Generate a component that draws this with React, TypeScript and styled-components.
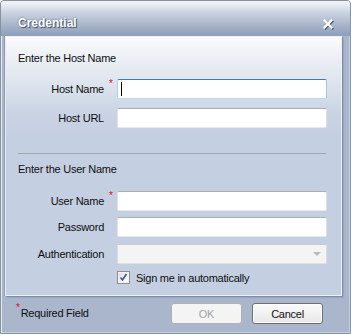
import React from "react";
import styled, { createGlobalStyle } from "styled-components";

const GlobalStyle = createGlobalStyle`
  html, body {
    margin: 0;
    padding: 0;
    background: #ffffff;
  }
  body {
    font-family: "Liberation Sans", Arial, sans-serif;
    font-size: 11px;
    letter-spacing: -0.25px;
    color: #0f0f0f;
  }
`;

export default function App() {
  return (
    <React.Fragment>
      <GlobalStyle />
      <Window>
        <TitleBar>
          <Title>{"Credential"}</Title>
          <CloseIcon viewBox="0 0 10 10" width={10} height={10}>
            <path d="M1.5 1.5 L8.5 8.5 M8.5 1.5 L1.5 8.5" />
          </CloseIcon>
        </TitleBar>
        <Body>
          <Panel>
            <SectionTitle>{"Enter the Host Name"}</SectionTitle>
            <FieldRow $mt={14}>
              <Label>{"Host Name"}</Label>
              <Required>{"*"}</Required>
              <TextBox $focused>
                <input type="text" readOnly />
              </TextBox>
            </FieldRow>
            <FieldRow $mt={9}>
              <Label>{"Host URL"}</Label>
              <span />
              <TextBox>
                <input type="text" readOnly />
              </TextBox>
            </FieldRow>
            <Separator />
            <SectionTitle $mt={8}>{"Enter the User Name"}</SectionTitle>
            <FieldRow $mt={15}>
              <Label>{"User Name"}</Label>
              <Required>{"*"}</Required>
              <TextBox>
                <input type="text" readOnly />
              </TextBox>
            </FieldRow>
            <FieldRow $mt={6}>
              <Label>{"Password"}</Label>
              <span />
              <TextBox>
                <input type="password" readOnly />
              </TextBox>
            </FieldRow>
            <FieldRow $mt={7}>
              <Label>{"Authentication"}</Label>
              <span />
              <SelectBox>
                <SelectArrow />
              </SelectBox>
            </FieldRow>
            <FieldRow $mt={7}>
              <span />
              <span />
              <CheckRow>
                <CheckBox>
                  <svg viewBox="0 0 11 11" width={11} height={11}>
                    <path d="M2.5 5.5 L4.5 8 L8.5 2" />
                  </svg>
                </CheckBox>
                <CheckLabel>{"Sign me in automatically"}</CheckLabel>
              </CheckRow>
            </FieldRow>
          </Panel>
        </Body>
        <Footer>
          <RequiredNote>
            <FooterStar>{"*"}</FooterStar>
            {"Required Field"}
          </RequiredNote>
          <ButtonGroup>
            <DialogButton disabled>{"OK"}</DialogButton>
            <DialogButton>{"Cancel"}</DialogButton>
          </ButtonGroup>
        </Footer>
      </Window>
    </React.Fragment>
  );
}

const Window = styled.div`
  width: 351px;
  height: 334px;
  box-sizing: border-box;
  display: flex;
  flex-direction: column;
  background: #a9b6cc;
  border: 1px solid #86929f;
  border-radius: 4px 4px 0 0;
  box-shadow: inset 1px 1px 0 #e6eaf1, inset -1px -1px 0 #c9d1de;
  overflow: hidden;
`;

const TitleBar = styled.div`
  height: 35px;
  flex: none;
  display: flex;
  align-items: flex-start;
  justify-content: space-between;
  box-sizing: border-box;
  padding: 14px 17px 0 17px;
  background: linear-gradient(
    to bottom,
    #f4f6f9 0px,
    #e3e8ef 5px,
    #c9d2df 12px,
    #a8b5ca 24px,
    #8e9eb9 35px
  );
`;

const Title = styled.div`
  font-weight: bold;
  font-size: 12px;
  line-height: 16px;
  letter-spacing: 0;
  color: #ffffff;
  text-shadow: 1px 1px 0 #4d5b73, 0 0 2px #5d6b84;
`;

const CloseIcon = styled.svg`
  margin-top: 4px;
  stroke: #ffffff;
  stroke-width: 2.2;
  stroke-linecap: square;
  fill: none;
  filter: drop-shadow(1px 1px 0 #4d5b73);
`;

const Body = styled.div`
  display: flex;
  padding: 0 8px 0 4px;
`;

const Panel = styled.div`
  flex: 1;
  height: 260px;
  box-sizing: border-box;
  display: flex;
  flex-direction: column;
  padding: 14px 0 0 12px;
  border: 1px solid #eef1f6;
  border-left-color: #e9edf3;
  box-shadow: -1px 0 0 #8d9bb3, 1px 1px 0 #7f8ea8, 2px 2px 1px #9aa8bf;
  background: linear-gradient(
    to bottom,
    #fbfcfd 0px,
    #eef1f6 18px,
    #dfe5ee 45px,
    #cad4e5 75px,
    #c4cfe1 100px,
    #c4cfe1 100%
  );
`;

const SectionTitle = styled.div<{ $mt?: number }>`
  margin-top: ${(props) => props.$mt ?? 0}px;
  line-height: 14px;
`;

const FieldRow = styled.div<{ $mt: number }>`
  display: grid;
  grid-template-columns: 86px 13px 210px;
  align-items: center;
  margin-top: ${(props) => props.$mt}px;
`;

const Label = styled.div`
  text-align: right;
  line-height: 14px;
  white-space: nowrap;
`;

const Required = styled.span`
  align-self: start;
  color: #e0101a;
  font-size: 10px;
  line-height: 10px;
  margin: 0 0 0 5px;
`;

const TextBox = styled.div<{ $focused?: boolean }>`
  position: relative;
  height: 20px;
  box-sizing: border-box;
  border: 1px solid;
  border-radius: 2px;
  border-color: ${(props) =>
    props.$focused
      ? "#3d7bad #a4c9e3 #b7d9ed #b5cfe7"
      : "#abadb3 #dbdfe6 #e3e9ef #e2e3ea"};
  background: #ffffff;

  input {
    width: 100%;
    height: 100%;
    box-sizing: border-box;
    border: none;
    outline: none;
    background: transparent;
    padding: 0 3px;
    font: inherit;
  }

  ${(props) =>
    props.$focused &&
    `&::after {
      content: "";
      position: absolute;
      left: 3px;
      top: 2px;
      width: 1px;
      height: 14px;
      background: #000000;
    }`}
`;

const SelectBox = styled.div`
  position: relative;
  height: 20px;
  box-sizing: border-box;
  border: 1px solid;
  border-color: #c5c8cc #d9dbde #dfe1e3 #d9dbde;
  border-radius: 2px;
  background: #f4f4f4;
`;

const SelectArrow = styled.span`
  position: absolute;
  right: 5px;
  top: 7px;
  width: 0;
  height: 0;
  border-left: 4px solid transparent;
  border-right: 4px solid transparent;
  border-top: 4px solid #b9b9b9;
`;

const Separator = styled.div`
  margin-top: 25px;
  width: 308px;
  height: 1px;
  background: #a3a6aa;
`;

const CheckRow = styled.div`
  display: flex;
  align-items: center;
  height: 13px;
`;

const CheckBox = styled.span`
  width: 13px;
  height: 13px;
  box-sizing: border-box;
  border: 1px solid #8f8f8f;
  background: linear-gradient(135deg, #dcdcdc 0%, #f4f4f4 60%, #ffffff 100%);
  box-shadow: inset 0 0 0 1px #f2f2f2;
  display: flex;
  align-items: center;
  justify-content: center;

  svg {
    stroke: #3d5593;
    stroke-width: 1.6;
    fill: none;
  }
`;

const CheckLabel = styled.span`
  margin-left: 6px;
  line-height: 14px;
  white-space: nowrap;
`;

const Footer = styled.div`
  flex: 1;
  display: flex;
  justify-content: space-between;
  align-items: flex-start;
  padding: 7px 27px 0 15px;
`;

const RequiredNote = styled.div`
  display: flex;
  align-items: flex-start;
  padding-top: 1px;
  line-height: 14px;
  margin-top: 2px;
`;

const FooterStar = styled.span`
  color: #e0101a;
  font-size: 10px;
  line-height: 8px;
  margin-right: 1px;
  margin-top: -2px;
`;

const ButtonGroup = styled.div`
  display: flex;
  gap: 10px;
`;

const DialogButton = styled.button`
  width: 71px;
  height: 21px;
  box-sizing: border-box;
  padding: 0;
  font-family: "Liberation Sans", Arial, sans-serif;
  font-size: 11px;
  letter-spacing: -0.25px;
  color: #111111;
  border: 1px solid #707070;
  border-radius: 3px;
  background: linear-gradient(to bottom, #fbfbfb 0%, #f1f1f1 50%, #e6e6e6 100%);
  box-shadow: inset 0 0 0 1px #fcfcfc;

  &:disabled {
    color: #a3a3a3;
    border-color: #adb2b5;
    background: #f4f4f4;
    box-shadow: none;
  }
`;
